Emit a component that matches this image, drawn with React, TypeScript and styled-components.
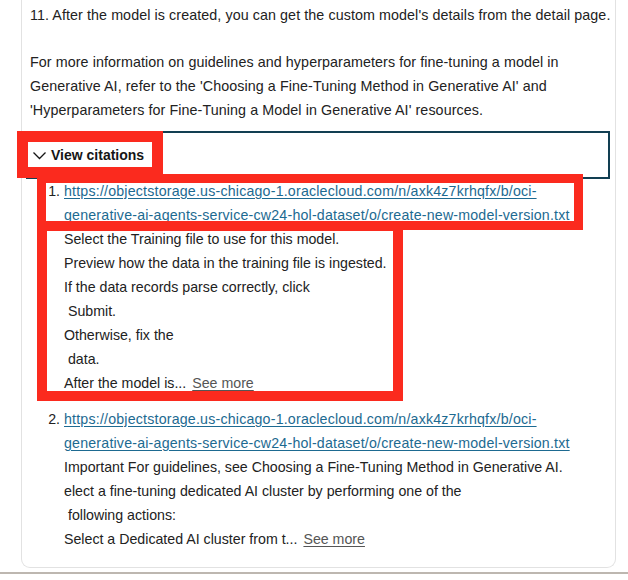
import React from "react";
import styled, { createGlobalStyle } from "styled-components";

const GlobalStyle = createGlobalStyle`
  html, body { margin: 0; padding: 0; background: #ffffff; }
  body { font-family: "Liberation Sans", Arial, sans-serif; color: #222222; }
`;

const Page = styled.div`
  position: relative;
  width: 628px;
  height: 580px;
  overflow: hidden;
  background: #ffffff;
`;

const Card = styled.div`
  box-sizing: border-box;
  margin-left: 21px;
  width: 595px;
  padding: 3px 5px 16px 4px;
  border: 1px solid #e2e2e2;
  border-top: none;
  border-radius: 0 0 9px 9px;
  background: #ffffff;
`;

const Para = styled.p<{ $gap?: number }>`
  margin: 0 0 ${(p) => p.$gap ?? 0}px 0;
  padding-left: 4px;
  font-size: 14.3px;
  line-height: 24px;
  letter-spacing: 0.08px;
  white-space: nowrap;
`;

const Summary = styled.button`
  box-sizing: border-box;
  display: flex;
  align-items: center;
  gap: 4px;
  width: 100%;
  height: 48px;
  margin-top: 9px;
  padding: 0 0 0 4px;
  border: 2px solid #123f52;
  background: #ffffff;
  font-family: "Liberation Sans", Arial, sans-serif;
  font-size: 14px;
  font-weight: 700;
  color: #161616;
  cursor: pointer;
`;

const List = styled.ol`
  list-style: none;
  margin: 0;
  padding: 0;
  display: flex;
  flex-direction: column;
  gap: 12px;
`;

const Item = styled.li`
  display: grid;
  grid-template-columns: 38px 1fr;
  font-size: 14.2px;
  line-height: 24px;
`;

const Num = styled.span`
  text-align: right;
  padding-right: 4px;
`;

const Body = styled.div`
  display: flex;
  flex-direction: column;
  white-space: nowrap;
`;

const Link = styled.a`
  color: #1d6a91;
  letter-spacing: 0.2px;
  text-decoration: underline;
  text-underline-offset: 2px;
`;

const Line = styled.span`
  display: block;
`;

const SeeMore = styled.a`
  margin-left: 6px;
  color: #555555;
  text-decoration: underline;
  text-underline-offset: 2px;
`;

const Rule = styled.div`
  margin-top: 4px;
  height: 2px;
  background: #bdb7b0;
`;

const Mark = styled.div<{ $w: number }>`
  position: absolute;
  box-sizing: border-box;
  border: ${(p) => p.$w}px solid #fb2a1e;
  pointer-events: none;
`;

const Chevron = () => (
  <svg width="15" height="9" viewBox="0 0 15 9" fill="none">
    <polyline points="1.5,1.5 7.5,7.5 13.5,1.5" stroke="#161616" strokeWidth="1.3" />
  </svg>
);

const citations = [
  {
    url1: "https://objectstorage.us-chicago-1.oraclecloud.com/n/axk4z7krhqfx/b/oci-",
    url2: "generative-ai-agents-service-cw24-hol-dataset/o/create-new-model-version.txt",
    lines: [
      "Select the Training file to use for this model.",
      "Preview how the data in the training file is ingested.",
      "If the data records parse correctly, click",
      "\u00a0Submit.",
      "Otherwise, fix the",
      "\u00a0data.",
    ],
    last: "After the model is...",
  },
  {
    url1: "https://objectstorage.us-chicago-1.oraclecloud.com/n/axk4z7krhqfx/b/oci-",
    url2: "generative-ai-agents-service-cw24-hol-dataset/o/create-new-model-version.txt",
    lines: [
      "Important For guidelines, see Choosing a Fine-Tuning Method in Generative AI.",
      "elect a fine-tuning dedicated AI cluster by performing one of the",
      "\u00a0following actions:",
    ],
    last: "Select a Dedicated AI cluster from t...",
  },
];

export default function App() {
  return (
    <Page>
      <GlobalStyle />
      <Card>
        <Para $gap={23}>
          11. After the model is created, you can get the custom model's details from the detail page.
        </Para>
        <Para>
          For more information on guidelines and hyperparameters for fine-tuning a model in
          <br />
          Generative AI, refer to the 'Choosing a Fine-Tuning Method in Generative AI' and
          <br />
          'Hyperparameters for Fine-Tuning a Model in Generative AI' resources.
        </Para>
        <Summary type="button">
          <Chevron />
          View citations
        </Summary>
        <List>
          {citations.map((c, i) => (
            <Item key={i}>
              <Num>{i + 1}.</Num>
              <Body>
                <Link href="#">
                  {c.url1}
                  <br />
                  {c.url2}
                </Link>
                {c.lines.map((l, j) => (
                  <Line key={j}>{l}</Line>
                ))}
                <Line>
                  {c.last}
                  <SeeMore href="#">See more</SeeMore>
                </Line>
              </Body>
            </Item>
          ))}
        </List>
      </Card>
      <Rule />
      <Mark $w={11} style={{ left: 17, top: 131, width: 146, height: 47 }} />
      <Mark $w={9} style={{ left: 37, top: 174, width: 546, height: 56 }} />
      <Mark $w={10} style={{ left: 37, top: 221, width: 366, height: 180 }} />
    </Page>
  );
}
